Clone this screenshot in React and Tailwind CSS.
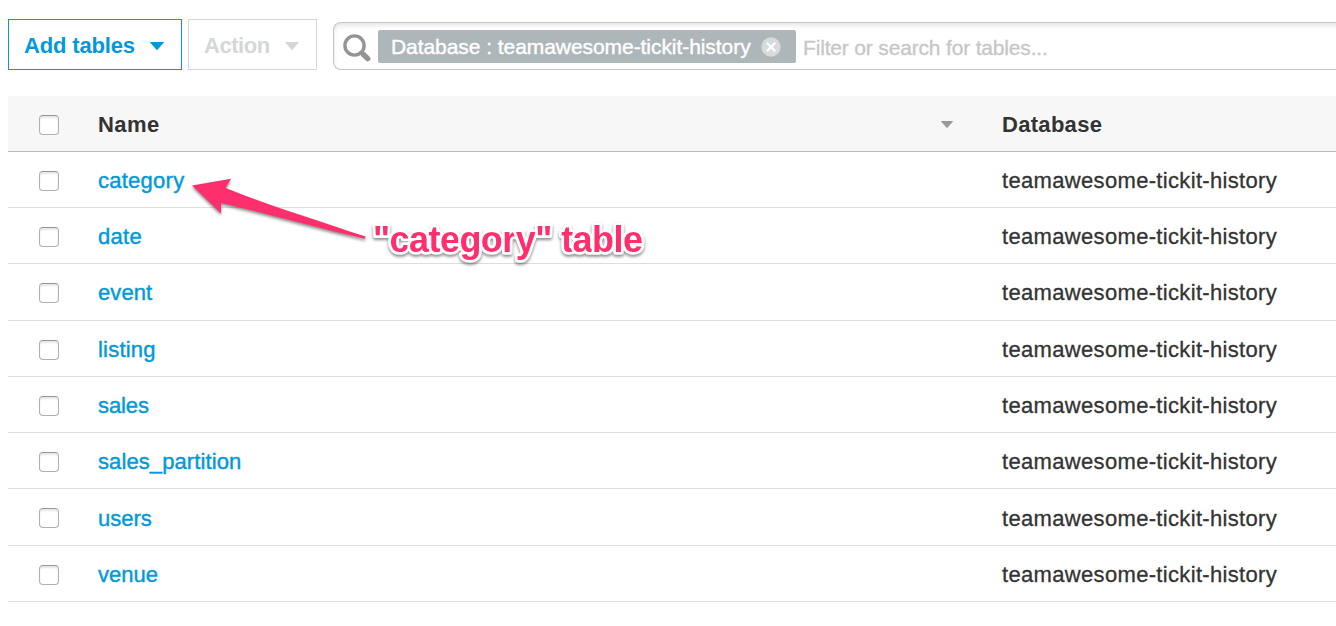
const rows = [
  { name: "category", h: "h-14 pt-[2px]", tracking: "tracking-[0.25px]" },
  { name: "date", h: "h-14 pt-[2px]", tracking: "tracking-[0.3px]" },
  { name: "event", h: "h-[57px] pt-px", tracking: "tracking-[0.1px]" },
  { name: "listing", h: "h-14 pt-[2px]", tracking: "tracking-[0.2px]" },
  { name: "sales", h: "h-14 pt-[2px]", tracking: "tracking-[-0.1px]" },
  { name: "sales_partition", h: "h-14 pt-[2px]", tracking: "tracking-[0.1px]" },
  { name: "users", h: "h-[57px] pt-px", tracking: "tracking-[0px]", text: "pt-[2px]" },
  { name: "venue", h: "h-14 pt-[2px]", tracking: "tracking-[0px]" },
];

function Checkbox() {
  return (
    <span
      role="checkbox"
      aria-checked="false"
      className="ml-[31px] mt-px size-5 shrink-0 rounded-[4px] border border-[#b0b0b0] border-t-[#969696] bg-white shadow-[inset_0_2px_2px_#e6e6e6]"
    />
  );
}

function Caret({ className }) {
  return (
    <svg viewBox="0 0 14 8" className={className} fill="currentColor">
      <path d="M0.5 0h13q.7.2.2.8L7.7 7.6q-.7.6-1.4 0L.3.8Q-.2.2.5 0Z" />
    </svg>
  );
}

function Toolbar() {
  return (
    <div className="flex h-[77px] items-start pl-2">
      <button className="mt-[19px] flex h-[51px] w-[174px] shrink-0 items-center border border-[#0099db] pl-[15px] pt-px font-bold text-[#0099db]">
        <span className="w-[111px] whitespace-nowrap pt-[2px] text-left tracking-[-0.15px]">Add tables</span>
        <Caret className="ml-[15px] mt-px h-2 w-3.5" />
      </button>
      <button className="ml-1.5 mt-[19px] flex h-[51px] w-[129px] shrink-0 items-center border border-[#d5d7d7] pl-[15px] pt-px font-bold text-[#d5d7d7]">
        <span className="w-[66px] whitespace-nowrap pt-[2px] text-left tracking-[-0.45px]">Action</span>
        <Caret className="ml-[15px] mt-px h-2 w-3.5" />
      </button>
      <div className="-mr-3 ml-4 mt-[22px] flex h-12 flex-1 items-center rounded-l-[8px] border border-r-0 border-[#c4c4c4] pl-[9px] text-[21px] shadow-[inset_0_3px_5px_#e8e8e8]">
        <svg viewBox="0 0 28 28" className="mt-[3px] size-7 shrink-0" fill="none" stroke="#949494">
          <circle cx="11.5" cy="11.5" r="9.6" strokeWidth="3.4" />
          <path d="M18 18l3 3" strokeWidth="4" />
          <path d="M20.5 20.5l4.2 4.2" strokeWidth="5.4" strokeLinecap="round" />
        </svg>
        <div className="ml-[7px] flex h-[33px] w-[418px] shrink-0 items-center rounded-[2px] bg-[#adb6b8] pl-[13px] text-white">
          <span className="mt-0.5 w-[361px] whitespace-nowrap tracking-[-0.06px] [-webkit-text-stroke:0.4px_white]">
            Database : teamawesome-tickit-history
          </span>
          <svg viewBox="0 0 20 20" className="ml-[9px] mt-0.5 size-5 shrink-0">
            <circle cx="10" cy="10" r="9.7" fill="#d9dbdb" />
            <path d="M5.8 5.8l8.4 8.4M14.2 5.8l-8.4 8.4" stroke="white" strokeWidth="2.2" />
          </svg>
        </div>
        <span className="ml-[7px] mt-1 whitespace-nowrap tracking-[-0.17px] text-[#c6c6c6] [-webkit-text-stroke:0.3px_#c6c6c6]">
          Filter or search for tables...
        </span>
      </div>
    </div>
  );
}

function Annotation() {
  return (
    <svg
      viewBox="0 0 480 110"
      className="pointer-events-none absolute left-[180px] top-[160px] h-[110px] w-[480px] overflow-visible drop-shadow-[0_2px_1.5px_rgba(0,0,0,0.45)]"
    >
      <path
        d="M12 25.5L51 18.7L45.5 28C80 42 130 58 185.5 76.5L185 78.8C130 66 80 52 41 43L41 53.5Z"
        fill="#ff2f6e"
      />
      <text
        x="193"
        y="92"
        textLength="270"
        className="fill-[#ff2f6e] stroke-white stroke-[5.5px] text-[36px] font-bold [paint-order:stroke] [stroke-linejoin:round]"
      >
        "category" table
      </text>
    </svg>
  );
}

export default function App() {
  return (
    <div className="relative h-[626px] w-[1336px] overflow-hidden bg-white font-['Liberation_Sans',Arial,sans-serif] text-[22px] leading-[26px] text-[#333]">
      <Toolbar />
      <div className="ml-2 mt-[19px]">
        <div className="flex h-14 items-center border-b border-[#bcbcbc] bg-[#f7f7f7] pt-[2px] font-bold">
          <Checkbox />
          <span className="ml-[39px] w-[843px] tracking-[0.4px]">Name</span>
          <Caret className="h-[7px] w-3 text-[#999]" />
          <span className="ml-[49px] tracking-[0.3px]">Database</span>
        </div>
        {rows.map((r) => (
          <div key={r.name} className={`flex items-center border-b border-[#dedede] ${r.h}`}>
            <Checkbox />
            <a className={`ml-[39px] w-[904px] text-[#0099db] [-webkit-text-stroke:0.4px_#0099db] ${r.tracking} ${r.text ?? ""}`}>
              {r.name}
            </a>
            <span className={`whitespace-nowrap tracking-[0.33px] [-webkit-text-stroke:0.3px_#333] ${r.text ?? ""}`}>
              teamawesome-tickit-history
            </span>
          </div>
        ))}
      </div>
      <Annotation />
    </div>
  );
}
